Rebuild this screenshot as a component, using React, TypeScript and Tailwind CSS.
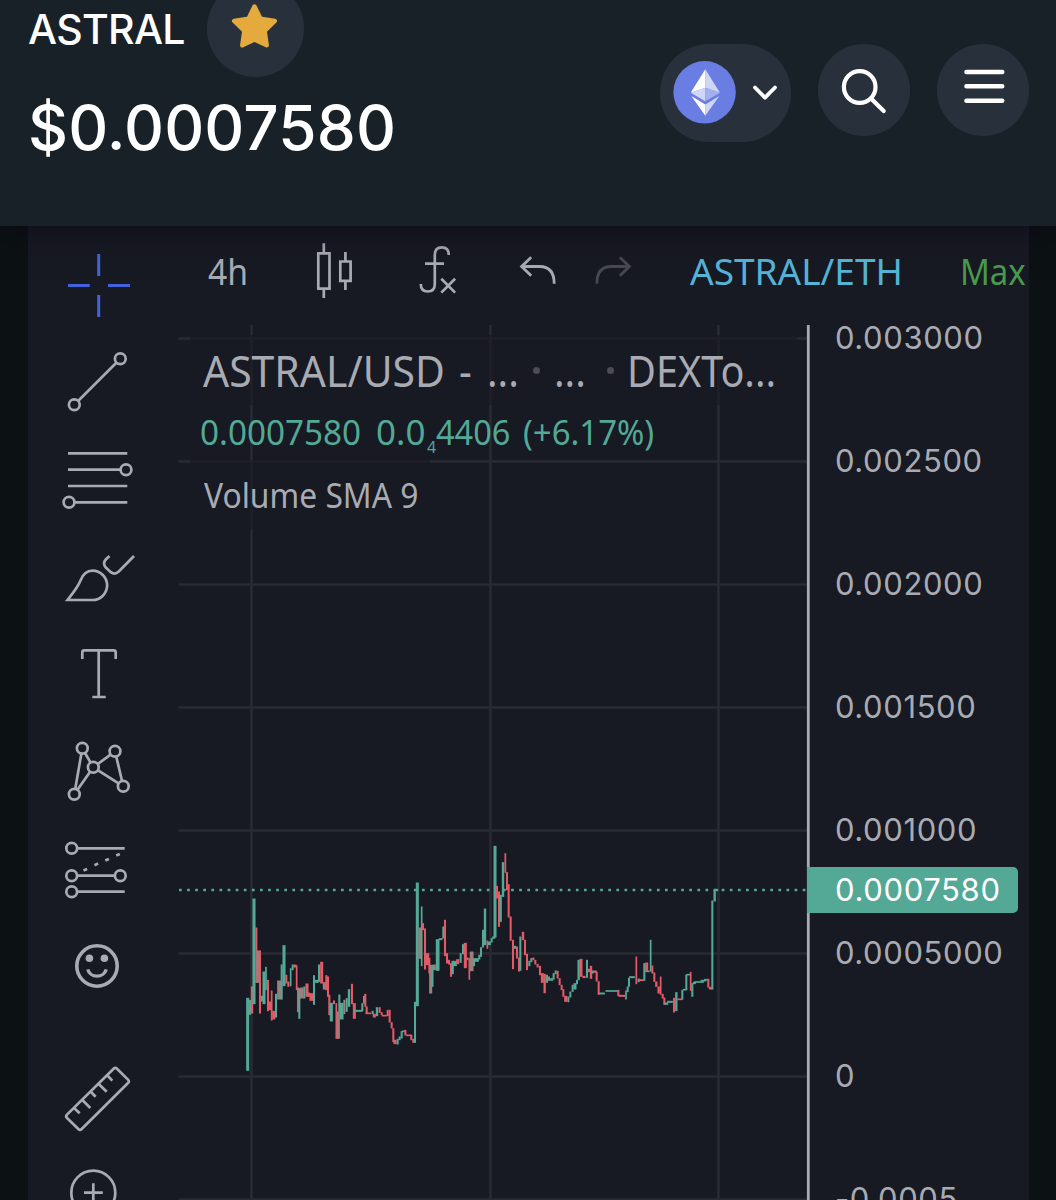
import type { ReactNode } from "react";

type Tone = "g" | "r" | "m";
type Bar = [x: number, top: number, bottom: number, tone: Tone, width?: number];

const TONES = { g: "#53a896", r: "#e35a66", m: "#9a7f7c" };

// x, high, low in thirds of a pixel, measured from (230, 830)
const BARS: Bar[] = [
  [53, 504, 722, "g", 8], [60, 510, 554, "g"], [66, 470, 550, "r", 6], [72, 206, 522, "g", 8],
  [79, 293, 458, "r"], [85, 362, 458, "m", 10], [90, 362, 550, "r"], [96, 498, 514, "g"],
  [102, 425, 522, "g", 8], [108, 411, 480, "g", 4], [114, 450, 543, "r"], [120, 515, 540, "r", 8],
  [125, 482, 571, "r", 4], [131, 543, 568, "r", 8], [138, 492, 562, "g"], [148, 452, 508, "m", 12],
  [155, 404, 508, "g"], [162, 346, 468, "g", 8], [169, 435, 460, "r"], [175, 455, 470, "r"],
  [182, 415, 468, "g", 4], [188, 404, 420, "g"], [195, 404, 412, "r", 8], [200, 407, 480, "r", 4],
  [204, 473, 546, "r"], [208, 475, 566, "g"], [215, 473, 505, "m", 10], [223, 470, 505, "g"],
  [231, 461, 500, "r", 8], [237, 488, 500, "r"], [244, 490, 512, "r", 10], [252, 436, 524, "g"],
  [260, 450, 458, "g", 12], [267, 404, 455, "g"], [275, 396, 460, "r", 8], [284, 457, 478, "m", 10],
  [289, 436, 480, "r"], [294, 440, 500, "r"], [298, 495, 555, "r"], [304, 519, 574, "g", 8],
  [312, 512, 522, "r"], [319, 520, 626, "r", 4], [325, 545, 626, "m", 8], [328, 494, 545, "g"],
  [335, 519, 568, "g", 10], [343, 510, 552, "m"], [350, 505, 545, "g"], [357, 478, 530, "g", 6],
  [366, 462, 522, "r"], [373, 520, 566, "r", 8], [385, 540, 545, "g", 24], [397, 520, 543, "g"],
  [402, 498, 520, "g"], [406, 492, 530, "r"], [410, 530, 550, "r"], [415, 548, 552, "r", 16],
  [428, 543, 552, "g"], [433, 552, 562, "r", 8], [441, 532, 558, "g", 6], [449, 532, 548, "r"],
  [455, 547, 555, "r"], [463, 555, 559, "r", 14], [473, 540, 558, "r"], [479, 540, 577, "r"],
  [485, 577, 595, "r"], [490, 595, 636, "r"], [495, 630, 642, "r", 8], [503, 627, 643, "g"],
  [509, 620, 630, "g"], [515, 604, 625, "g"], [520, 602, 606, "g", 8], [526, 600, 616, "r"],
  [537, 614, 618, "r", 16], [544, 616, 630, "r"], [550, 627, 638, "r"], [555, 516, 638, "g"],
  [562, 158, 528, "g", 8], [570, 293, 386, "m", 8], [575, 230, 408, "g", 4], [579, 280, 300, "r"],
  [585, 296, 418, "r"], [592, 370, 405, "r", 10], [598, 384, 430, "r"], [602, 405, 490, "m", 8],
  [608, 405, 470, "g", 4], [613, 404, 420, "m", 8], [623, 328, 422, "g", 10], [632, 325, 330, "g", 10],
  [640, 290, 325, "g"], [645, 270, 378, "r"], [651, 370, 400, "r"], [657, 390, 403, "r"],
  [663, 400, 440, "r"], [668, 393, 432, "g", 6], [675, 393, 408, "g", 10], [683, 388, 402, "r", 8],
  [692, 370, 398, "g"], [699, 343, 372, "g"], [706, 339, 414, "r", 8], [713, 383, 390, "r"],
  [718, 385, 449, "r", 4], [725, 365, 423, "m", 10], [732, 385, 408, "g"], [740, 385, 395, "g", 12],
  [748, 375, 388, "g"], [753, 352, 380, "g"], [759, 300, 352, "g"], [765, 236, 345, "g", 6],
  [772, 332, 356, "r", 4], [778, 335, 345, "g", 8], [785, 325, 337, "g"], [791, 320, 326, "g", 8],
  [795, 48, 322, "g", 8], [801, 168, 205, "r"], [807, 185, 290, "r"], [812, 195, 275, "g", 6],
  [819, 97, 200, "g", 6], [826, 70, 128, "r", 4], [831, 127, 180, "r"], [836, 163, 262, "r"],
  [842, 260, 332, "r"], [849, 330, 417, "r"], [855, 348, 356, "g"], [861, 350, 385, "r"],
  [867, 383, 424, "r"], [871, 320, 422, "g"], [879, 306, 330, "r", 6], [885, 330, 375, "r"],
  [891, 372, 420, "r"], [898, 393, 408, "g"], [904, 385, 396, "g"], [910, 383, 390, "r"],
  [916, 390, 403, "r"], [923, 402, 412, "r"], [930, 408, 435, "r"], [937, 430, 458, "r", 8],
  [944, 432, 489, "r", 6], [951, 435, 458, "g"], [957, 440, 452, "m"], [965, 445, 452, "g", 8],
  [971, 430, 448, "g"], [977, 422, 432, "g"], [983, 423, 445, "r"], [989, 445, 465, "r"],
  [995, 465, 480, "r"], [1000, 478, 500, "r"], [1007, 498, 515, "r", 8], [1015, 500, 516, "g"],
  [1021, 485, 502, "g"], [1028, 465, 485, "g"], [1035, 460, 478, "g", 8], [1041, 450, 462, "g"],
  [1046, 390, 450, "g", 6], [1053, 387, 440, "r", 8], [1062, 438, 444, "r", 8], [1071, 390, 443, "g"],
  [1077, 417, 426, "r"], [1083, 408, 446, "r", 6], [1088, 422, 430, "g"], [1095, 422, 428, "r", 10],
  [1100, 426, 454, "r"], [1106, 454, 494, "r"], [1116, 488, 493, "g", 16], [1145, 481, 485, "g", 36],
  [1165, 480, 498, "r"], [1176, 495, 500, "r", 18], [1188, 482, 508, "g", 4], [1193, 470, 486, "g"],
  [1197, 444, 470, "g"], [1206, 439, 444, "g", 16], [1219, 380, 462, "r", 4], [1226, 446, 456, "g"],
  [1234, 448, 453, "r", 12], [1243, 400, 452, "g"], [1250, 398, 426, "r", 8], [1256, 422, 426, "g"],
  [1262, 330, 424, "g", 4], [1267, 407, 430, "r"], [1273, 428, 455, "r"], [1279, 455, 470, "r", 6],
  [1286, 470, 490, "r", 6], [1292, 440, 494, "r", 4], [1298, 492, 505, "r"], [1303, 503, 524, "r"],
  [1309, 518, 524, "g", 10], [1320, 513, 518, "g", 16], [1332, 504, 547, "r"], [1339, 487, 543, "g", 6],
  [1350, 506, 510, "r", 14], [1357, 480, 508, "g"], [1364, 477, 481, "g", 10], [1369, 434, 480, "g"],
  [1376, 432, 436, "g", 12], [1382, 426, 482, "r", 4], [1387, 460, 500, "g"], [1393, 456, 462, "g", 8],
  [1407, 454, 458, "g", 28], [1420, 450, 454, "g", 16], [1428, 447, 451, "g", 10], [1435, 447, 472, "r"],
  [1441, 471, 478, "r", 8], [1447, 212, 478, "g"], [1454, 180, 214, "g", 6], [1460, 177, 183, "g", 8],
];

const GRID_Y = [338.5, 461.5, 584.5, 707.5, 830.5, 953.5, 1076.5, 1199.5];
const GRID_X = [251.5, 490.5, 718.5];
const PRICES = [
  "0.003000",
  "0.002500",
  "0.002000",
  "0.001500",
  "0.001000",
  "0.0005000",
  "0",
  "-0.0005",
];

function Dots({ points }: { points: number[][] }) {
  return (
    <>
      {points.map(([x, y]) => (
        <circle key={`${x}-${y}`} cx={x} cy={y} r="5.4" fill="#171923" />
      ))}
    </>
  );
}

const TOOLS: { name: string; className?: string; art: ReactNode }[] = [
  {
    name: "Cross",
    className: "text-[#4263dd]",
    art: <path strokeWidth="3" d="M38.7 7v22M38.7 48v22M8 38.5h21.7M48 38.5h22" />,
  },
  {
    name: "Trend line",
    art: (
      <>
        <path d="M14.3 60.7l46-46" />
        <Dots points={[[60.3, 14.7], [14.3, 60.7]]} />
      </>
    ),
  },
  {
    name: "Fib retracement",
    art: (
      <>
        <path d="M8 12.3h59.3M8 28.7h58M8 45h59.3M9 61.3h58.3" />
        <Dots points={[[66, 28.7], [9, 61.3]]} />
      </>
    ),
  },
  {
    name: "Brush",
    art: (
      <path d="M7.5 62C13 55 18 49 20.5 42.5C23 36 27 32.7 32.5 32.7A14.6 14.6 0 0 1 32.5 62ZM49.5 18l-3.7 3.5q-3.5 4 0 8l5 4.7q4 3 8-.7L74 18" />
    ),
  },
  {
    name: "Text",
    art: <path d="M22.3 24v-6.7q0-2 2-2h29.4q2 0 2 2V24M38.7 15.3V62M32.3 62h13.4" />,
  },
  {
    name: "Pattern",
    art: (
      <>
        <path d="M22.3 16.3l11 19L55 19.3l8.3 35-30-19-19 27Z" />
        <Dots points={[[22.3, 16.3], [55, 19.3], [33.3, 35.3], [14.3, 62.3], [63.3, 54.3]]} />
      </>
    ),
  },
  {
    name: "Forecast",
    art: (
      <>
        <path d="M11.7 19.3h53M11.7 46.7h48.6M11.7 62.7h53" />
        <path d="M23.5 41.5l3.6-1.6M34.5 36.2l3.6-1.6M45.3 31.5l3.6-1.6M56.2 26.5l3.6-1.6" />
        <Dots points={[[11.7, 19.3], [11.7, 46.7], [60.3, 46.7], [11.7, 62.7]]} />
      </>
    ),
  },
  {
    name: "Emoji",
    art: (
      <>
        <circle cx="37" cy="40" r="20.2" strokeWidth="3.6" />
        <path strokeWidth="3.4" d="M27.8 43.3a9.4 8.6 0 0 0 18.4 0" />
        <circle cx="29.4" cy="32.3" r="3.8" fill="currentColor" stroke="none" />
        <circle cx="44.4" cy="32.3" r="3.8" fill="currentColor" stroke="none" />
      </>
    ),
  },
  {
    name: "Measure",
    className: "mt-[37px]",
    art: (
      <path d="M53.6 8.7q1.7-1.7 3.4 0L68 19.6q1.7 1.7 0 3.4L21.7 69q-1.7 1.7-3.4 0L7 58q-1.7-1.7 0-3.4ZM14 48l5.7 5.3M22.3 40l8 8M30.7 31.7l5 5M38.7 24l8 7.7M47.3 15.3l5 5.4" />
    ),
  },
  {
    name: "Zoom in",
    art: (
      <>
        <circle cx="33.3" cy="35.7" r="22" />
        <path d="M24 35.7h18.8M33.3 26.3v18.8" />
      </>
    ),
  },
];

function Header() {
  return (
    <header className="relative z-10 flex h-[226px] shrink-0 justify-between bg-[#192128] pr-[27px] pl-[28px] shadow-[0_0_36px_rgba(10,0,16,0.6)]">
      <div className="-mt-5 font-[Inter,sans-serif] font-medium text-white">
        <div className="flex h-[97px] items-center">
          <h1 className="w-[179px] pt-[2px] text-[41px] leading-none tracking-[-0.7px]">ASTRAL</h1>
          <button className="flex h-[97px] w-[97px] items-center justify-center rounded-full bg-[#28313b]">
            <svg width="97" height="97" viewBox="207 -20 97 97">
              <path
                d="M254.5 6.5L260.5 18.8L274.8 21L264.6 31L266.7 45.3L254.5 39.5L242.3 45.3L244.4 31L234.2 21L248.5 18.8Z"
                fill="#e4aa3d"
                stroke="#e4aa3d"
                strokeWidth="4.5"
                strokeLinejoin="round"
              />
            </svg>
          </button>
        </div>
        <p className="mt-[20px] text-[62px] leading-[62px] tracking-[0.15px] whitespace-nowrap">
          $0.0007580
        </p>
      </div>
      <div className="flex items-start gap-[27px] pt-[44px]">
        <button className="h-[98px] w-[131px] rounded-full bg-[#28313b]">
          <svg width="131" height="98" viewBox="660 44 131 98">
            <circle cx="704.6" cy="92.3" r="31.2" fill="#697de2" />
            <path fill="#fff" d="M705.3 69.3L690.7 92.7L705.3 87.7Z" />
            <path fill="#d0d6f6" d="M705.3 69.3L720 92.7L705.3 87.7Z" />
            <path fill="#d0d6f6" d="M690.7 92.7L705.3 87.7V101.2Z" />
            <path fill="#a3b0ee" d="M720 92.7L705.3 87.7V101.2Z" />
            <path fill="#fff" d="M691.3 96L705.3 104.5V115.7Z" />
            <path fill="#d0d6f6" d="M719.3 96L705.3 104.5V115.7Z" />
            <path
              d="M755 87.5l10 10.2 10-10.2"
              fill="none"
              stroke="#fff"
              strokeWidth="3.8"
              strokeLinecap="round"
              strokeLinejoin="round"
            />
          </svg>
        </button>
        <button className="h-[92px] w-[92px] rounded-full bg-[#28313b]">
          <svg width="92" height="92" fill="none" stroke="#fff" strokeWidth="4.2" strokeLinecap="round">
            <circle cx="41.7" cy="43" r="15.8" />
            <path d="M53 54.5L65.7 67" />
          </svg>
        </button>
        <button className="h-[92px] w-[92px] rounded-full bg-[#28313b]">
          <svg width="92" height="92" stroke="#fff" strokeWidth="4.6" strokeLinecap="round">
            <path d="M29.5 28h35.7M29.5 42.3h35.7M29.5 56.7h35.7" />
          </svg>
        </button>
      </div>
    </header>
  );
}

function Toolbar() {
  return (
    <div className="flex h-[99px] shrink-0 items-start pt-[12px] pl-[30px] text-[37px] whitespace-nowrap">
      <span className="mt-[8px] w-[99px] origin-left scale-x-[0.91] leading-[50px]">4h</span>
      <svg className="mr-[55px]" width="50" height="64" viewBox="307 238 50 64" fill="none" stroke="currentColor" strokeWidth="2.7">
        <path d="M318.3 253.3h11.2v35.4h-11.2ZM340.3 261.5h10.3v19.3h-10.3ZM323.8 243.3v10M323.8 288.7V298M345.4 252v9.5M345.4 280.8V290" />
      </svg>
      <svg className="mr-[50px]" width="50" height="64" viewBox="412 238 50 64" fill="none" stroke="currentColor" strokeWidth="2.7">
        <path d="M448.8 255q0-7.6-7-7.6t-7 7.6v29q0 7.5-7 7.5t-7-7.5M425 263.7h19M441.3 278.8l13.8 13.8M455.1 278.8l-13.8 13.8" />
      </svg>
      <svg className="mr-[28px]" width="46" height="64" viewBox="512 238 46 64" fill="none" stroke="currentColor" strokeWidth="2.8">
        <path d="M531.2 257.3l-9.6 9.2 9.6 9.2M521.6 266.5h18q14.6 0 14.6 17.3" />
      </svg>
      <svg className="mr-[52px] text-[#474852]" width="52" height="64" viewBox="586 238 52 64" fill="none" stroke="currentColor" strokeWidth="2.8">
        <path d="M619.8 257.3l9.6 9.2-9.6 9.2M629.4 266.5h-18q-14.6 0-14.6 17.3" />
      </svg>
      <span className="mt-[8px] w-[270px] leading-[50px] text-[#55b3d6]">ASTRAL/ETH</span>
      <span className="mt-[8px] w-[69px] origin-left scale-x-[0.89] leading-[50px] text-[#4a9a4c]">
        Max
      </span>
    </div>
  );
}

function Legend() {
  return (
    <div className="absolute top-[10px] left-[12px] whitespace-nowrap">
      <div className="flex h-[70px] w-[607px] items-center bg-[#171923]/60 pl-[13px] text-[44px]">
        <span className="w-[256px] origin-left scale-x-[0.93]">ASTRAL/USD</span>
        <span className="w-[28px] origin-left scale-x-[0.9]">-</span>
        <span className="w-[46px] origin-left scale-x-[0.9]">...</span>
        <i className="mr-[14px] size-[7px] rounded-full bg-[#4b4c56]" />
        <span className="w-[53px] origin-left scale-x-[0.9]">...</span>
        <i className="mr-[13px] size-[7px] rounded-full bg-[#4b4c56]" />
        <span className="w-[165px] origin-left scale-x-[0.9]">DEXTo...</span>
      </div>
      <div className="flex h-[55px] items-center pl-[10px] text-[35px] text-[#53a896]">
        <span className="w-[176px] origin-left scale-x-[0.95]">0.0007580</span>
        <span className="w-[51px] origin-left">0.0</span>
        <span className="w-[9px] pt-[28px] text-[16px]">4</span>
        <span className="w-[87px] origin-left scale-x-[0.93]">4406</span>
        <span className="origin-left scale-x-[0.94]">(+6.17%)</span>
      </div>
      <div className="flex h-[70px] w-[240px] items-center bg-[#171923]/60 pl-[14px] text-[35px]">
        <span className="origin-left scale-x-[0.908]">Volume SMA 9</span>
      </div>
    </div>
  );
}

function Chart() {
  return (
    <div className="relative flex min-h-0 grow">
      <svg className="shrink-0" width="632" height="875" viewBox="178 325 632 875">
        <g stroke="#282a34" strokeWidth="2.6">
          {GRID_Y.map((y) => (
            <path key={y} d={`M178.5 ${y}H808`} />
          ))}
          {GRID_X.map((x) => (
            <path key={x} d={`M${x} 325V1200`} />
          ))}
        </g>
        <path d="M179 890H808" stroke="#53a896" strokeWidth="2.7" strokeDasharray="2.7 5.4" />
        <g transform="translate(230 830) scale(0.33333)">
          {BARS.map(([x, top, bottom, tone, width = 5], i) => (
            <rect
              key={i}
              x={x - width / 2 - 0.6}
              y={top - 0.5}
              width={width + 1.2}
              height={bottom - top + 1}
              fill={TONES[tone]}
            />
          ))}
        </g>
        <path d="M808.3 325V1200" stroke="#a9abb3" strokeWidth="2.8" />
      </svg>
      <Legend />
      <div className="grow pl-[25px] font-[Inter,sans-serif] text-[31px] leading-[25px] tracking-[0.6px]">
        {PRICES.map((price) => (
          <div key={price} className="h-[123px]">
            {price}
          </div>
        ))}
      </div>
      <div className="absolute top-[542px] left-[629px] flex h-[46px] w-[211px] items-center rounded-r-[5px] bg-[#53a896] pl-[28px] font-[Inter,sans-serif] text-[31px] tracking-[0.65px] text-white">
        0.0007580
      </div>
    </div>
  );
}

export default function App() {
  return (
    <div className="flex h-[1200px] w-[1056px] flex-col overflow-hidden bg-[#0c1114]">
      <Header />
      <main className="mr-[27px] ml-[28px] flex min-h-0 grow overflow-hidden bg-[#171923] font-['Noto_Sans',sans-serif] text-[#a9abb3]">
        <nav className="flex w-[150px] shrink-0 flex-col gap-[21px] pt-[21px] pl-[32px]">
          {TOOLS.map(({ name, className = "", art }) => (
            <button key={name} aria-label={name} className={`size-[76px] shrink-0 ${className}`}>
              <svg
                className="overflow-visible"
                width="76"
                height="76"
                viewBox="0 0 76 76"
                fill="none"
                stroke="currentColor"
                strokeWidth="2.7"
              >
                {art}
              </svg>
            </button>
          ))}
        </nav>
        <section className="flex grow flex-col">
          <Toolbar />
          <Chart />
        </section>
      </main>
    </div>
  );
}
